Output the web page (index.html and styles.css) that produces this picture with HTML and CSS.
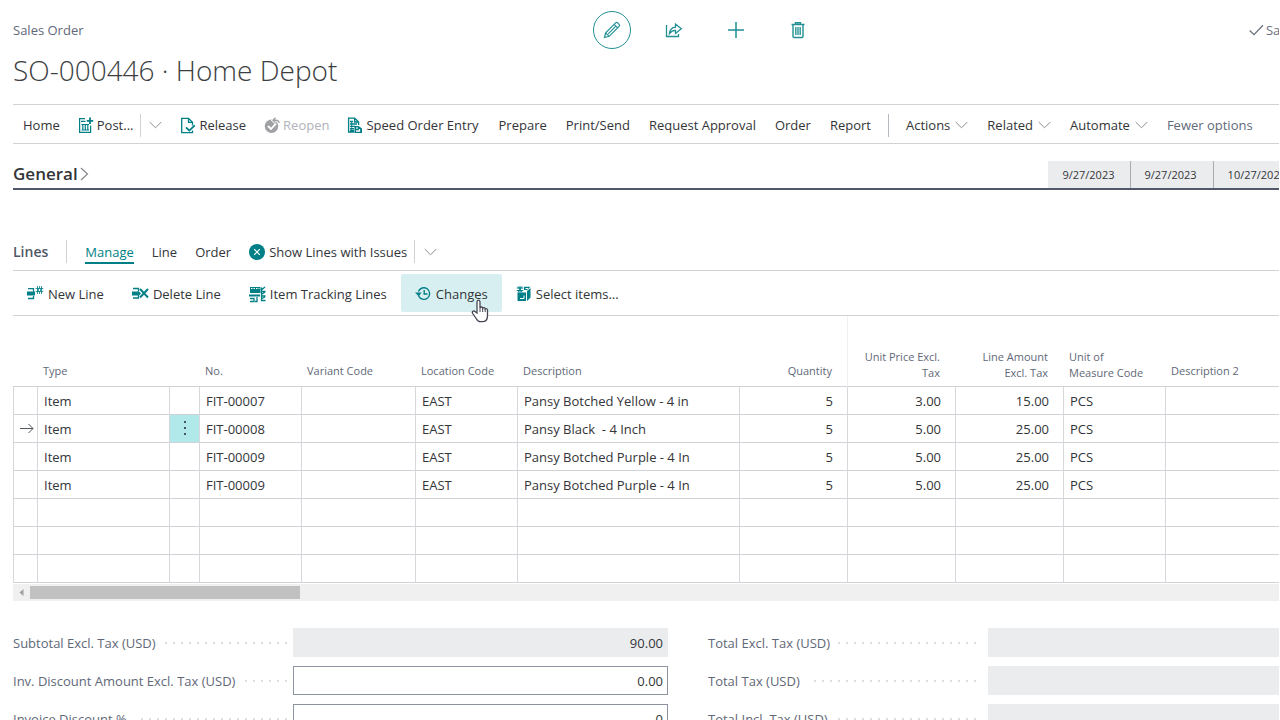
FILE: index.html
```html
<!DOCTYPE html>
<html lang="en">
<head>
<meta charset="utf-8">
<title>SO-000446 · Home Depot</title>
<link rel="stylesheet" href="styles.css">
</head>
<body>
<svg class="defs" aria-hidden="true">
  <symbol id="chev" viewBox="0 0 13 8"><path d="M.7 1l5.800 5.800L12.300 1" fill="none" stroke="currentColor"/></symbol>
</svg>
<main class="page">
  <header class="top">
    <span class="kind">Sales Order</span>
    <div class="tools">
      <button class="tool round" aria-label="Edit"><svg width="20" height="20" viewBox="0 0 20 20" fill="none" stroke="currentColor" stroke-width="1.200"><path d="M2.500 17.500l1.200-4.700L13.600 2.900a1.500 1.500 0 0 1 2.100 0l1.400 1.400a1.500 1.500 0 0 1 0 2.100L7.200 16.300zM3.700 12.800l3.500 3.500M12.200 4.300l3.500 3.500M13.900 6.100L6.200 13.800"/></svg></button>
      <button class="tool" aria-label="Share"><svg width="18" height="16" viewBox="0 0 18 16" fill="none" stroke="currentColor" stroke-width="1.300"><path d="M1.500 3v11.500h12V12M4.500 11.500c.4-4.200 2.500-6 6-6.300V2l5.800 4.700-5.800 4.700V8.300c-2.800 0-4.300.8-6 3.200z"/></svg></button>
      <button class="tool" aria-label="New"><svg width="18" height="18" viewBox="0 0 18 18" fill="none" stroke="currentColor" stroke-width="1.500"><path d="M9 1v16M1 9h16"/></svg></button>
      <button class="tool" aria-label="Delete"><svg width="16" height="18" viewBox="0 0 16 18" fill="none" stroke="currentColor" stroke-width="1.400"><path d="M1.500 3.500h13M5.500 3.500V1.700h5v1.800M3 3.500v11.800c0 .7.400 1.200 1.200 1.200h7.600c.8 0 1.200-.5 1.200-1.200V3.500"/><path d="M5 6h6v8H5z" fill="currentColor" stroke="none" opacity=".5"/><path d="M5.500 6v8M8 6v8M10.500 6v8" stroke-width=".7"/></svg></button>
    </div>
    <span class="status"><svg width="15" height="12" viewBox="0 0 15 12" fill="none" stroke="currentColor" stroke-width="1.300"><path d="M.7 6.500L5 10.700 14 1.300"/></svg>Saved</span>
  </header>
  <h1 class="title">SO-000446 · Home Depot</h1>

  <nav class="bar">
    <div class="group">
    <button>Home</button>
    <div class="split">
      <button class="ico"><svg class="teal" width="16" height="17" viewBox="0 0 16 17" fill="none" stroke="currentColor" stroke-width="1.200"><path d="M7 1.600H1.600v13.800h11V8.500"/><path d="M12 .5v6.500M8.800 3.800h6.400" stroke-width="1.800"/><path d="M3 4.300h4.500M3.500 7.500h7.500M4.800 7.500v5.500M7.300 7.500v5.500M9.800 7.500v5.500M3.500 13h7.500"/></svg>Post...</button>
      <button class="drop" aria-label="More posting actions"><svg class="chev" width="13" height="8"><use href="#chev"/></svg></button>
    </div>
    <button class="ico"><svg class="teal" width="16" height="17" viewBox="0 0 16 17" fill="none" stroke="currentColor" stroke-width="1.300"><path d="M12.500 13.500v2.200H1.700V1.300h6.800l4 4v3.200M8.500 1.300v4h4"/><path d="M6 10.300l3.300 3.300 5.500-5.200" stroke-width="1.800"/></svg>Release</button>
    <button class="ico" disabled><svg width="16" height="17" viewBox="0 0 16 17" fill="none"><circle cx="7.500" cy="9.300" r="6.700" fill="#a0a1a4"/><path d="M4 9l3 3 5-5.300" stroke="#fff" stroke-width="1.800"/><path d="M15 6.500c0-2-1-3.300-3.500-3.300H9.200M11.500.8L9 3.200l2.500 2.400" stroke="#fff" stroke-width="3"/><path d="M15 6c0-1.900-1-2.800-3.500-2.800H9.200M11.500.8L9 3.200l2.500 2.400" stroke="#a0a1a4" stroke-width="1.400"/></svg>Reopen</button>
    <button class="ico"><svg class="teal" width="16" height="17" viewBox="0 0 16 17" fill="none" stroke="currentColor" stroke-width="1.300"><path d="M7 15H1.600V1.200h6l4 3.800v3M7.600 1.200V5h4M3 4.500h3M3 7h7M3 9.300h5M3 11.600h4M3 13.500h4"/><path d="M4.700 4v10" stroke-width=".9"/><path d="M7.500 9h4l3.500 2.500V16H7.500z" fill="currentColor" stroke="none"/><path d="M9 14h3.500v-2M9.300 11h1.500" stroke="#fff"/></svg>Speed Order Entry</button>
    </div>
    <div class="group loose">
    <button>Prepare</button><button>Print/Send</button><button>Request Approval</button><button>Order</button><button>Report</button>
    <span class="sep"></span>
    <button class="menu">Actions<svg class="chev" width="13" height="8"><use href="#chev"/></svg></button>
    <button class="menu">Related<svg class="chev" width="13" height="8"><use href="#chev"/></svg></button>
    <button class="menu">Automate<svg class="chev" width="13" height="8"><use href="#chev"/></svg></button>
    <button class="muted">Fewer options</button>
    </div>
  </nav>

  <section class="general">
    <h2>General<svg width="9" height="15" viewBox="0 0 9 15" fill="none" stroke="#85878b" stroke-width="1.200"><path d="M1 2l6.500 6L1 14"/></svg></h2>
    <div class="dates"><span>9/27/2023</span><span>9/27/2023</span><span>10/27/2023</span></div>
  </section>

  <section class="lines">
    <div class="linehead">
      <h3>Lines</h3>
      <button class="active">Manage</button><button>Line</button><button>Order</button>
      <button class="ico issues"><svg width="16" height="16" viewBox="0 0 16 16"><circle cx="8" cy="8" r="8" fill="#007f86"/><path d="M5.200 5.200l5.600 5.600M10.800 5.200l-5.600 5.600" stroke="#fff" stroke-width="1.200"/></svg>Show Lines with Issues</button>
      <button class="drop" aria-label="More"><svg class="chev" width="13" height="8"><use href="#chev"/></svg></button>
    </div>
    <div class="actions">
      <button><svg class="teal" width="17" height="16" viewBox="0 0 17 16" fill="none" stroke="currentColor"><path d="M1 2.700h5.500v3M6.500 10v2.500H1" stroke-width="1.300"/><path d="M0 5.500h8v4H0z" fill="currentColor" stroke="none"/><path d="M12.500 0v8M8.700 2.500h7.600M8.700 5.500h7.600M10.500 0v8M14.500 0v8" stroke-width=".8"/><circle cx="12.500" cy="4" r="1.500" fill="#fff"/></svg>New Line</button>
      <button><svg class="teal" width="17" height="16" viewBox="0 0 17 16" fill="none" stroke="currentColor"><path d="M1 2.500h5.500v3M1 12h5.500v-3" stroke-width="1.300"/><path d="M0 5.500h7l2 2-2 2H0z" fill="currentColor" stroke="none"/><path d="M8 3l8 8.500M16 3L8 11.500" stroke-width="1.900"/></svg>Delete Line</button>
      <button><svg class="teal" width="17" height="17" viewBox="0 0 17 17" fill="none" stroke="currentColor"><path d="M1 1h10.500v6H1zM0 8.500h11v2H0z" fill="currentColor" stroke="none"/><path d="M2 2.500h8.500" stroke="#fff" stroke-dasharray="1.500 1"/><path d="M1 12.500h4v3H1M8 11v4.500H6M12.500 1.500v13h4M12 5.500h4.500M12 10h4.500M13 3.500l3-2.500M13 8l3-2M13 12.500l3-1.500" stroke-width="1.300"/></svg>Item Tracking Lines</button>
      <button class="hover"><svg class="teal" width="17" height="16" viewBox="0 0 17 16" fill="none" stroke="currentColor" stroke-width="1.400"><path d="M3.400 5.500a5.800 5.800 0 1 1 .2 4.500M9.200 4V8h3.300"/><path d="M0 6.500l3.800 4L6.500 6.500z" fill="currentColor" stroke="none"/></svg>Changes
        <svg class="cursor" width="18" height="24" viewBox="0 0 18 24"><path d="M6 14V3c0-2.600 3-2.600 3 0v6c.5-1.500 2.500-1.300 2.700.3.700-1.200 2.400-.8 2.500.7.800-.8 2.300-.3 2.300 1.200v5.500c0 3.300-1.800 6-5.200 6H9.500c-2 0-3.200-1-4-2.700l-3.800-5.500c-1.200-1.900.8-3.300 2.300-1.900z" fill="#fff" stroke="#454654" stroke-width="1.300"/><path d="M9 9v4M11.700 10v3M14.200 10.500V13" stroke="#454654"/></svg></button>
      <button><svg class="teal" width="16" height="16" viewBox="0 0 16 16" fill="none" stroke="currentColor"><path d="M1.500 6.500H10V15H1.500zM11 5l3.500-3v9.500L11 15zM8 .7h6.500L11 4H8z" fill="currentColor" stroke="none"/><path d="M4 0v6.500M.7 2h6.600M.7 4.500h6.600M2 .5l4 6M6 .5l-4 6"/><path d="M4 12.500h4v-3M9.500 2.500H12" stroke="#fff"/></svg>Select items...</button>
    </div>

    <div class="gridwrap">
    <table>
      <colgroup><col class="c24"><col class="c132"><col class="c30"><col class="c102"><col class="c114"><col class="c102"><col class="c222"><col class="c108"><col class="c108"><col class="c108"><col class="c102"><col></colgroup>
      <thead><tr><th></th><th>Type</th><th></th><th>No.</th><th>Variant Code</th><th>Location Code</th><th>Description</th><th class="n">Quantity</th><th class="n frozen two">Unit Price Excl. Tax</th><th class="n two">Line Amount Excl. Tax</th><th class="two">Unit of<br>Measure Code</th><th>Description 2</th></tr></thead>
      <tbody>
        <tr><td></td><td>Item</td><td></td><td>FIT-00007</td><td></td><td>EAST</td><td>Pansy Botched Yellow - 4 in</td><td class="n">5</td><td class="n">3.00</td><td class="n">15.00</td><td>PCS</td><td></td></tr>
        <tr><td class="mark"><svg width="14" height="11" viewBox="0 0 14 11" fill="none" stroke="#55585c"><path d="M0 5.500h13M8.500 1L13 5.500 8.500 10"/></svg></td><td>Item</td><td class="more"><button aria-label="Show more options"><svg width="3" height="15" viewBox="0 0 3 15" fill="#44565b"><path d="M1 0h2v2H1zM1 6h2v2H1zM1 12h2v2H1z"/></svg></button></td><td>FIT-00008</td><td></td><td>EAST</td><td class="pre">Pansy Black  - 4 Inch</td><td class="n">5</td><td class="n">5.00</td><td class="n">25.00</td><td>PCS</td><td></td></tr>
        <tr><td></td><td>Item</td><td></td><td>FIT-00009</td><td></td><td>EAST</td><td>Pansy Botched Purple - 4 In</td><td class="n">5</td><td class="n">5.00</td><td class="n">25.00</td><td>PCS</td><td></td></tr>
        <tr><td></td><td>Item</td><td></td><td>FIT-00009</td><td></td><td>EAST</td><td>Pansy Botched Purple - 4 In</td><td class="n">5</td><td class="n">5.00</td><td class="n">25.00</td><td>PCS</td><td></td></tr>
        <tr><td></td><td></td><td></td><td></td><td></td><td></td><td></td><td></td><td></td><td></td><td></td><td></td></tr>
        <tr><td></td><td></td><td></td><td></td><td></td><td></td><td></td><td></td><td></td><td></td><td></td><td></td></tr>
        <tr><td></td><td></td><td></td><td></td><td></td><td></td><td></td><td></td><td></td><td></td><td></td><td></td></tr>
      </tbody>
    </table>
    </div>
    <div class="scroll"><svg width="17" height="17" viewBox="0 0 17 17"><path d="M10.500 5v7L6.500 8.500z" fill="#a0a0a0"/></svg><span class="thumb"></span></div>
  </section>

  <section class="totals">
    <div class="field"><label for="f1">Subtotal Excl. Tax (USD)</label><i></i><input id="f1" value="90.00" readonly></div>
    <div class="field"><label for="f2">Total Excl. Tax (USD)</label><i></i><input id="f2" readonly></div>
    <div class="field"><label for="f3">Inv. Discount Amount Excl. Tax (USD)</label><i></i><input id="f3" value="0.00"></div>
    <div class="field"><label for="f4">Total Tax (USD)</label><i></i><input id="f4" readonly></div>
    <div class="field"><label for="f5">Invoice Discount %</label><i></i><input id="f5" value="0"></div>
    <div class="field"><label for="f6">Total Incl. Tax (USD)</label><i></i><input id="f6" readonly></div>
  </section>
</main>
</body>
</html>
```
FILE: styles.css
```css
* { box-sizing: border-box; }
html { height: 100%; overflow: hidden; }
body {
  margin: 0;
  height: 100%;
  overflow: hidden;
  background: #fff;
  color: #333538;
  font: 13px/20px "Open Sans", "Noto Sans", sans-serif;
}
button {
  display: flex;
  align-items: center;
  flex: none;
  margin: 0;
  padding: 0;
  border: 0;
  background: none;
  color: inherit;
  font: inherit;
  white-space: nowrap;
}
svg { display: block; flex: none; }
h1, h2, h3 { margin: 0; }
.defs { position: absolute; width: 0; height: 0; }
.page { margin-right: 1px; padding-left: 13px; overflow: hidden; }
.teal { color: #007f86; }
.chev { color: #8b8e93; }

.top {
  display: grid;
  grid-template-columns: 1fr auto 1fr;
  align-items: center;
  height: 50px;
  margin: 5px -118px 0 0;
}
.kind { color: #5f6878; }
.tools { display: flex; gap: 24px; }
.tool {
  justify-content: center;
  width: 38px;
  height: 38px;
  color: #218f94;
}
.round { border: 1px solid #218f94; border-radius: 50%; }
.status {
  display: flex;
  align-items: center;
  justify-self: end;
  gap: 2px;
  margin-right: 95px;
  color: #687080;
}
.title {
  height: 49px;
  color: #3c3e42;
  font-size: 28px;
  line-height: 30px;
  font-weight: 300;
}

.bar {
  display: flex;
  align-items: center;
  gap: 20px;
  height: 40px;
  padding: 2px 0 0 10px;
  border-top: 1px solid #d0d2d6;
  border-bottom: 1px solid #d0d2d6;
}
.group { display: flex; align-items: center; flex: none; gap: 18px; }
.ico { gap: 3px; }
.split { display: flex; }
.drop {
  height: 23px;
  margin-left: 7px;
  padding-left: 8px;
  border-left: 1px solid #cfd1d5;
}
.loose { gap: 19px; }
.menu { gap: 5px; }
.sep { width: 1px; height: 23px; margin: 0 -2px; background: #b4b8bf; }
.bar button:disabled { color: #b0b3ba; }
.bar .muted { color: #5f6a7b; }

.general {
  display: flex;
  align-items: flex-end;
  justify-content: space-between;
  height: 46px;
  border-bottom: 2px solid #50586a;
}
.general h2 {
  display: flex;
  align-items: center;
  gap: 2px;
  height: 29px;
  font-size: 17px;
  font-weight: 600;
}
.dates { display: flex; margin-right: -25px; }
.dates span {
  padding: 4px 15px 3px 14px;
  background: #ebecee;
  font-size: 11px;
}
.dates span + span { padding-right: 16px; border-left: 1px solid #a9abb0; }
.dates span:last-child { padding-right: 18px; }

.linehead {
  display: flex;
  align-items: center;
  gap: 18px;
  height: 38px;
  margin-top: 43px;
  border-bottom: 1px solid #d0d2d6;
}
.linehead h3 {
  padding-right: 18px;
  border-right: 1px solid #cfd1d5;
  color: #505866;
  font-size: 14px;
  font-weight: 600;
  line-height: 23px;
}
.linehead .active {
  color: #007f86;
  box-shadow: 0 2px #007f86;
}
.linehead .issues { gap: 4px; }
.linehead .drop { margin-left: -11px; padding-left: 9px; }
.actions {
  display: flex;
  align-items: center;
  height: 45px;
  border-bottom: 1px solid #d0d2d6;
}
.actions button {
  position: relative;
  gap: 4px;
  height: 38px;
  padding: 2px 14px 0;
}
.actions .hover { background: #d8eff1; border-radius: 2px; }
.cursor { position: absolute; left: 70px; top: 25px; }

.gridwrap { overflow: hidden; }
table {
  width: 100%;
  table-layout: fixed;
  border-spacing: 0;
}
.c24 { width: 24px; } .c30 { width: 30px; } .c102 { width: 102px; }
.c108 { width: 108px; } .c114 { width: 114px; } .c132 { width: 132px; }
.c222 { width: 222px; }
th {
  height: 71px;
  padding: 0 15px 7px 6px;
  border-bottom: 1px solid #d0d2d6;
  color: #5f6878;
  font-size: 11px;
  line-height: 16px;
  font-weight: 400;
  text-align: left;
  vertical-align: bottom;
}
.two { padding-bottom: 5px; }
td {
  height: 28px;
  padding: 0 6px;
  border-left: 1px solid #d6d8dc;
  border-bottom: 1px solid #d0d2d6;
  white-space: nowrap;
}
th:nth-child(11) { padding-right: 0; }
.n { text-align: right; }
td.n { padding-right: 14px; }
.frozen { border-left: 1px solid #f0f0f2; }
.pre { white-space: pre; }
td.more { padding: 0; background: #b1e9eb; }
.more button { justify-content: center; width: 100%; height: 27px; }
.scroll { display: flex; height: 17px; margin-top: 1px; background: #f0f0f0; }
.thumb { width: 270px; height: 13px; margin-top: 2px; background: #c1c1c1; }

.totals {
  display: grid;
  grid-template-columns: repeat(2, minmax(655px, 1fr));
  gap: 9px 40px;
  margin-top: 27px;
}
.field {
  display: grid;
  grid-template-columns: auto 1fr minmax(375px, calc(100% - 280px));
  align-items: center;
}
.field label { color: #5f6878; }
.field i {
  height: 2px;
  margin: 0 6px 0 8px;
  background: repeating-linear-gradient(to left, #dadcdf 0 2px, transparent 2px 8px);
}
.field:nth-child(even) i { margin-right: 12px; }
.field input {
  height: 29px;
  padding: 0 4px;
  border: 1px solid #8d93a1;
  border-radius: 0;
  background: #fff;
  color: #333538;
  font: inherit;
  text-align: right;
}
.field input:read-only { border-color: #ebecee; background: #ebecee; }
```
